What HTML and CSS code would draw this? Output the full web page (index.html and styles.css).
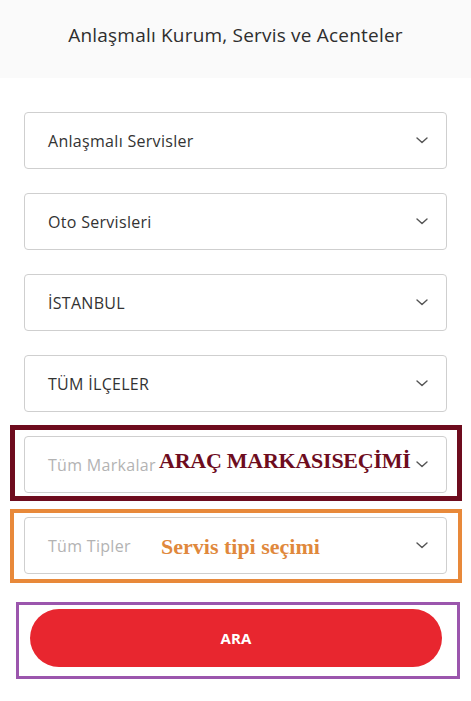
FILE: index.html
```html
<!DOCTYPE html>
<html lang="tr">
<head>
<meta charset="utf-8">
<title>Anlaşmalı Kurum, Servis ve Acenteler</title>
<link rel="stylesheet" href="styles.css">
</head>
<body>
<header class="page-header">
  <h1 class="page-title">Anlaşmalı Kurum, Servis ve Acenteler</h1>
</header>
<main class="search-form">
  <div class="select">
    <span class="select-value">Anlaşmalı Servisler</span>
    <svg class="chevron" viewBox="0 0 12 7" width="12" height="7"><path d="M1 1l5 4.6L11 1" fill="none" stroke="#555" stroke-width="1.4" stroke-linecap="round" stroke-linejoin="round"/></svg>
  </div>
  <div class="select">
    <span class="select-value">Oto Servisleri</span>
    <svg class="chevron" viewBox="0 0 12 7" width="12" height="7"><path d="M1 1l5 4.6L11 1" fill="none" stroke="#555" stroke-width="1.4" stroke-linecap="round" stroke-linejoin="round"/></svg>
  </div>
  <div class="select">
    <span class="select-value">İSTANBUL</span>
    <svg class="chevron" viewBox="0 0 12 7" width="12" height="7"><path d="M1 1l5 4.6L11 1" fill="none" stroke="#555" stroke-width="1.4" stroke-linecap="round" stroke-linejoin="round"/></svg>
  </div>
  <div class="select">
    <span class="select-value">TÜM İLÇELER</span>
    <svg class="chevron" viewBox="0 0 12 7" width="12" height="7"><path d="M1 1l5 4.6L11 1" fill="none" stroke="#555" stroke-width="1.4" stroke-linecap="round" stroke-linejoin="round"/></svg>
  </div>
  <div class="select annotated">
    <span class="select-value placeholder">Tüm Markalar</span>
    <svg class="chevron" viewBox="0 0 12 7" width="12" height="7"><path d="M1 1l5 4.6L11 1" fill="none" stroke="#555" stroke-width="1.4" stroke-linecap="round" stroke-linejoin="round"/></svg>
    <span class="frame frame-maroon"></span>
    <span class="note note-maroon">ARAÇ MARKASISEÇİMİ</span>
  </div>
  <div class="select annotated">
    <span class="select-value placeholder">Tüm Tipler</span>
    <svg class="chevron" viewBox="0 0 12 7" width="12" height="7"><path d="M1 1l5 4.6L11 1" fill="none" stroke="#555" stroke-width="1.4" stroke-linecap="round" stroke-linejoin="round"/></svg>
    <span class="frame frame-orange"></span>
    <span class="note note-orange">Servis tipi seçimi</span>
  </div>
  <div class="button-frame">
    <button class="search-button" type="button">ARA</button>
  </div>
</main>
</body>
</html>
```
FILE: styles.css
```css
* { box-sizing: border-box; }

body {
  margin: 0;
  background: #ffffff;
  font-family: "Open Sans", "Noto Sans", "Liberation Sans", sans-serif;
  color: #333333;
}

.page-header {
  background: #fafafa;
  height: 78px;
  padding-top: 22px;
}

.page-title {
  margin: 0;
  text-align: center;
  font-size: 19px;
  font-weight: 400;
  letter-spacing: 0.2px;
  line-height: 26px;
  color: #2e2e2e;
}

.search-form {
  padding: 34px 24px 0;
  display: flex;
  flex-direction: column;
  gap: 24px;
}

.select {
  position: relative;
  height: 57px;
  flex: 0 0 57px;
  border: 1px solid #cfcfcf;
  border-radius: 4px;
  background: #fff;
  display: flex;
  align-items: center;
  justify-content: space-between;
  padding: 0 18px 0 23px;
}

.select-value {
  font-size: 16px;
  letter-spacing: 0.3px;
  color: #333;
}

.select-value.placeholder {
  color: #b3b3b3;
}

.chevron {
  display: block;
}

.frame {
  position: absolute;
  z-index: 1;
  pointer-events: none;
}

.frame-maroon {
  top: -12px;
  left: -15px;
  right: -16px;
  bottom: -9px;
  border: 5px solid #6e0c1e;
}

.frame-orange {
  top: -9px;
  left: -15px;
  right: -16px;
  bottom: -10px;
  border: 4px solid #e8893a;
}

.note {
  position: absolute;
  z-index: 2;
  left: 134px;
  font-family: "Liberation Serif", "Times New Roman", serif;
  font-weight: 700;
  font-size: 22px;
  line-height: 24px;
  white-space: nowrap;
}

.note-maroon {
  top: 12px;
  color: #6e0c1e;
  letter-spacing: -0.25px;
}

.note-orange {
  left: 136px;
  top: 17px;
  color: #e0883c;
}

.button-frame {
  margin: 4px -13px 0 -8px;
  border: 3px solid #9b56ad;
  padding: 4px 15px 9px 11px;
}

.search-button {
  display: block;
  width: 100%;
  height: 58px;
  border: 0;
  border-radius: 29px;
  background: #e8262f;
  color: #fff;
  font-family: "Open Sans", "Noto Sans", sans-serif;
  font-weight: 700;
  font-size: 15px;
  letter-spacing: 0.2px;
  cursor: pointer;
}
```
